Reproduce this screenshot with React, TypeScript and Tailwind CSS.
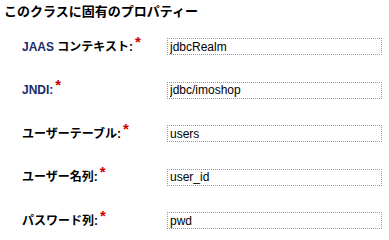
const rows = [
  { label: 'JAAS', rest: ' コンテキスト:', value: 'jdbcRealm' },
  { label: 'JNDI:', rest: '', value: 'jdbc/imoshop' },
  { label: '', rest: 'ユーザーテーブル:', value: 'users' },
  { label: '', rest: 'ユーザー名列:', value: 'user_id' },
  { label: '', rest: 'パスワード列:', value: 'pwd' },
]

export default function App() {
  return (
    <div
      className="w-[389px] h-[240px] bg-white text-black overflow-hidden"
      style={{ fontFamily: '"Liberation Sans", "Noto Sans CJK JP", sans-serif' }}
    >
      {/* Header */}
      <h2 className="h-[24.75px] pl-[4px] pt-[4px] text-[13px] leading-[16px] font-bold">
        このクラスに固有のプロパティー
      </h2>

      {/* Properties */}
      <div className="grid grid-rows-[repeat(5,43.5px)]">
        {rows.map((row) => (
          <div key={row.value} className="flex items-center">
            <div className="w-[167px] pl-[22px] text-[12px] font-bold leading-[16px] whitespace-nowrap">
              {row.label && <span className="text-[#1a2a6c]">{row.label}</span>}
              {row.rest}
              <span className="inline-block align-top text-[#cc0000] text-[15px] leading-[12px] font-bold ml-[2px] relative top-[-3px]">*</span>
            </div>
            <input
              readOnly
              value={row.value}
              className="w-[215px] h-[17px] border border-dotted border-[#999999] px-[2px] text-[12px] leading-[15px] outline-none"
              style={{ fontFamily: '"Liberation Sans", sans-serif' }}
            />
          </div>
        ))}
      </div>
    </div>
  )
}
